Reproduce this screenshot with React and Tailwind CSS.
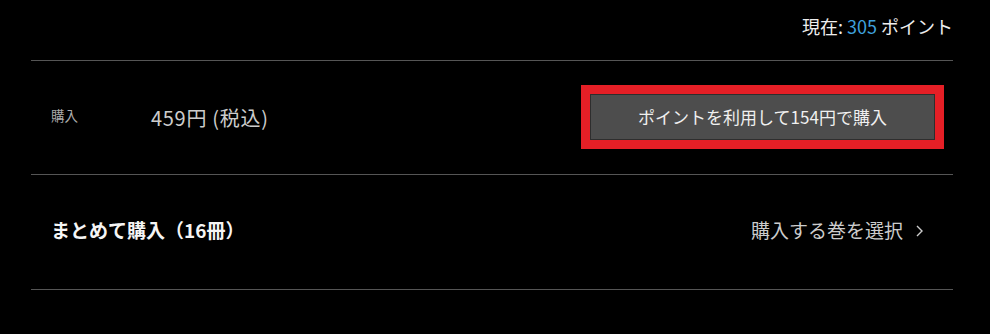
const App = () => {
  return (
    <div className="w-[990px] h-[334px] bg-black overflow-hidden font-['Noto_Sans_CJK_JP',sans-serif]">
      <div className="ml-[31px] w-[922px]">
        <div className="h-[60px] flex items-start justify-end pt-[12px]">
          <p className="text-[18px] leading-[28px] text-[#eeeeee]">
            現在: <span className="text-[#3fa0dc]">305</span> ポイント
          </p>
        </div>
        <div className="border-t border-[#555555] h-[114px] flex items-center pl-[20px]">
          <span className="w-[100px] text-[13.5px] text-[#aaaaaa] self-start pt-[44px]">購入</span>
          <span className="text-[20px] tracking-[0.7px] text-[#cccccc]">459円 (税込)</span>
          <div className="ml-auto mr-[9px] border-[9px] border-[#e51f26] mt-[-1px]">
            <button className="w-[345px] h-[46px] bg-[#4d4d4d] border border-[#2e2e2e] text-[17px] text-[#f0f0f0]">
              ポイントを利用して154円で購入
            </button>
          </div>
        </div>
        <div className="border-t border-[#555555] h-[115px] flex items-center pl-[20px]">
          <span className="text-[19px] font-bold text-[#f5f5f5] -mt-[3px]">まとめて購入（16冊）</span>
          <span className="ml-auto mr-[30px] text-[19px] text-[#cccccc] flex items-center gap-[13px] -mt-[3px]">
            購入する巻を選択
            <svg width="7" height="12" viewBox="0 0 7 12" fill="none">
              <path d="M1 1l5 5-5 5" stroke="#cccccc" strokeWidth="1.4" />
            </svg>
          </span>
        </div>
        <div className="border-t border-[#555555]" />
      </div>
    </div>
  );
};

export default App;
